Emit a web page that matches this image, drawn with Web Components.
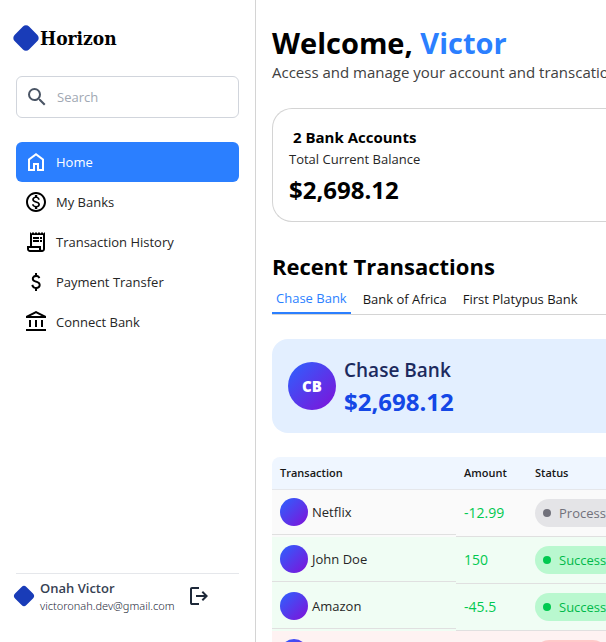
<!DOCTYPE html>
<html lang="en">
<head>
<meta charset="utf-8">
<title>Horizon</title>
<style>
  html, body { margin: 0; height: 100%; }
  body { font-family: "Open Sans", "Noto Sans", sans-serif; font-size: 13px; line-height: 20px; color: #000; background: #fff; overflow: hidden; }
</style>
</head>
<body>
<hz-app>
  <hz-sidebar slot="side">
    <hz-nav-item icon="home" active>Home</hz-nav-item>
    <hz-nav-item icon="coin">My Banks</hz-nav-item>
    <hz-nav-item icon="receipt">Transaction History</hz-nav-item>
    <hz-nav-item icon="dollar">Payment Transfer</hz-nav-item>
    <hz-nav-item icon="bank">Connect Bank</hz-nav-item>
    <hz-user slot="footer" name="Onah Victor" email="victoronah.dev@gmail.com"></hz-user>
  </hz-sidebar>
  <hz-welcome name="Victor">Access and manage your account and transcations efficiently</hz-welcome>
  <hz-balance count="2" total="$2,698.12"></hz-balance>
  <hz-recent>
    <hz-tab slot="tabs" active>Chase Bank</hz-tab>
    <hz-tab slot="tabs">Bank of Africa</hz-tab>
    <hz-tab slot="tabs">First Platypus Bank</hz-tab>
    <hz-account initials="CB" name="Chase Bank" total="$2,698.12"></hz-account>
    <hz-transactions></hz-transactions>
  </hz-recent>
</hz-app>
<script>
const ICONS = {
  search: 'M15.5 14h-.79l-.28-.27A6.471 6.471 0 0 0 16 9.5 6.5 6.5 0 1 0 9.5 16c1.61 0 3.09-.59 4.23-1.57l.27.28v.79l5 4.99L20.49 19l-4.99-5zm-6 0C7.01 14 5 11.99 5 9.5S7.01 5 9.5 5 14 7.01 14 9.5 11.99 14 9.5 14z',
  home: 'M6 19h3v-6h6v6h3v-9l-6-4.5L6 10zm-2 2V9l8-6 8 6v12h-7v-6h-2v6z',
  coin: 'M12 2C6.48 2 2 6.48 2 12s4.48 10 10 10 10-4.48 10-10S17.52 2 12 2zm0 18c-4.41 0-8-3.59-8-8s3.59-8 8-8 8 3.59 8 8-3.59 8-8 8zm.31-8.86c-1.77-.45-2.34-.94-2.34-1.67 0-.84.79-1.43 2.1-1.43 1.38 0 1.9.66 1.94 1.64h1.71c-.05-1.34-.87-2.57-2.49-2.97V5H10.9v1.69c-1.51.32-2.72 1.3-2.72 2.81 0 1.79 1.49 2.69 3.66 3.21 1.95.46 2.34 1.15 2.34 1.87 0 .53-.39 1.39-2.1 1.39-1.6 0-2.23-.72-2.32-1.64H8.04c.1 1.7 1.36 2.66 2.86 2.97V19h2.34v-1.67c1.52-.29 2.72-1.16 2.73-2.77-.01-2.2-1.9-2.96-3.66-3.42z',
  receipt: 'M19.5 3.5 18 2l-1.5 1.5L15 2l-1.5 1.5L12 2l-1.5 1.5L9 2 7.5 3.5 6 2v14H3v3c0 1.66 1.34 3 3 3h12c1.66 0 3-1.34 3-3V2zM15 20H6c-.55 0-1-.45-1-1v-1h10zm4-1c0 .55-.45 1-1 1s-1-.45-1-1v-3H8V5h11zM9 7h6v2H9zm7 0h2v2h-2zm-7 3h6v2H9zm7 0h2v2h-2z',
  dollar: 'M11.025 21v-2.15q-1.325-.3-2.287-1.15t-1.413-2.4l1.85-.75q.375 1.2 1.113 1.825t1.937.625q1.025 0 1.738-.462t.712-1.438q0-.875-.55-1.387t-2.55-1.163q-2.15-.675-2.95-1.612t-.8-2.288q0-1.625 1.05-2.525t2.15-1.025V3h2v2.1q1.25.2 2.063.913t1.187 1.737l-1.85.8q-.3-.8-.85-1.2t-1.5-.4q-1.1 0-1.675.488T9.825 8.65q0 .825.75 1.3t2.6 1q1.725.5 2.613 1.588t.887 2.512q0 1.775-1.05 2.7t-2.6 1.15V21z',
  bank: 'M5 17v-7h2v7zm6 0v-7h2v7zm-9 4v-2h20v2zm15-4v-7h2v7zM2 8V6l10-5 10 5v2zm4.475-2h11.05L12 3.25z',
  logout: 'M5 21q-.825 0-1.412-.587T3 19V5q0-.825.588-1.412T5 3h7v2H5v14h7v2zm11-4-1.375-1.45 2.55-2.55H9v-2h8.175l-2.55-2.55L16 7l5 5z'
};
const icon = n => `<svg class="icon" width="24" height="24" viewBox="0 0 24 24" fill="currentColor" aria-hidden="true"><path d="${ICONS[n]}"/></svg>`;
const define = (tag, css, html) => customElements.define(tag, class extends HTMLElement {
  constructor() {
    super();
    const attr = n => this.getAttribute(n) || '';
    this.attachShadow({ mode: 'open' }).innerHTML =
      `<style>:host,*{box-sizing:border-box}.icon{display:block;flex:none}h1,h2,h3,p{margin:0}${css}</style>${html(attr, this)}`;
  }
});

define('hz-logo', `:host{display:block;flex:none}svg{display:block;width:100%}`,
  () => `<svg viewBox="0 0 26 26" aria-hidden="true"><rect x="3.5" y="3.5" width="19" height="19" rx="4" fill="#193cb8" transform="rotate(45 13 13)"/></svg>`);

define('hz-app', `
  :host{display:grid;grid-template-columns:256px minmax(0,1fr);height:100vh;overflow:hidden}
  main{padding:24px 0 0 16px;overflow:hidden}`,
  () => `<slot name="side"></slot><main><slot></slot></main>`);

define('hz-sidebar', `
  :host{display:flex;flex-direction:column;padding:24px 16px 0;border-right:1px solid #d4d4d4}
  header{display:flex;align-items:center;height:28px;margin-left:-4px}
  header hz-logo{width:28px}
  h1{font:700 19px/26px "DejaVu Serif Condensed","DejaVu Serif",serif}
  label{display:flex;align-items:center;gap:8px;margin-top:24px;height:42px;padding:0 8px;border:1px solid #d1d5dc;border-radius:6px;color:#4a5565}
  input{flex:1;min-width:0;border:0;outline:0;padding:0;background:none;font:inherit;color:#000}
  input::placeholder{color:#a1a8b3;opacity:1}
  nav{display:flex;flex-direction:column;margin-top:24px}
  footer{margin-top:auto;border-top:1px solid #e5e7eb}`,
  () => `<header><hz-logo></hz-logo><h1>Horizon</h1></header>
  <label>${icon('search')}<input type="search" placeholder="Search" aria-label="Search"></label>
  <nav><slot></slot></nav><footer><slot name="footer"></slot></footer>`);

define('hz-nav-item', `
  :host{display:block}
  a{display:flex;align-items:center;gap:8px;height:40px;padding:0 8px;border-radius:6px;color:#262626;text-decoration:none}
  .icon{color:#000}
  :host([active]) a{background:#2b7fff;color:#fff;font-weight:500}
  :host([active]) .icon{color:#fff}`,
  a => `<a href="#${a('icon')}">${icon(a('icon'))}<span><slot></slot></span></a>`);

define('hz-user', `
  :host{display:flex;align-items:center;height:68px;padding-bottom:24px;margin-left:-4px}
  hz-logo{width:22px;margin:0 1px}
  div{margin:0 12px 0 4px;white-space:nowrap;color:#1e2939}
  strong{display:block;font-size:13px;line-height:20px;font-weight:600;color:#364153}
  small{display:block;font:300 11px/16px "Noto Sans",sans-serif}
  button{border:0;padding:0;background:none;color:#1e2939;cursor:pointer}`,
  a => `<hz-logo></hz-logo><div><strong>${a('name')}</strong><small>${a('email')}</small></div><button aria-label="Log out">${icon('logout')}</button>`);

define('hz-welcome', `
  :host{display:block}
  h1{font-size:29px;line-height:38px;font-weight:700}
  h1 span{color:#2b7fff}
  p{font-size:15px;line-height:20px;color:#404040;white-space:nowrap}`,
  a => `<h1>Welcome, <span>${a('name')}</span></h1><p><slot></slot></p>`);

define('hz-balance', `
  :host{display:block;margin-top:26px;padding:18px 16px 14px;border:1px solid #d4d4d4;border-right:0;border-radius:20px 0 0 20px}
  h2{font-size:15px;line-height:20px;font-weight:700;padding-left:4px}
  p{margin-top:2px;color:#262626}
  strong{display:block;font-size:24px;line-height:34px;margin-top:4px}`,
  a => `<h2>${a('count')} Bank Accounts</h2><p>Total Current Balance</p><strong>${a('total')}</strong>`);

define('hz-recent', `
  :host{display:block;margin-top:28px}
  h2{font-size:22px;line-height:32px;font-weight:700;padding-bottom:2px}
  .tabs{display:flex;gap:8px;border-bottom:1px solid #d4d4d4;height:31px}`,
  () => `<h2>Recent Transactions</h2><div class="tabs" role="tablist"><slot name="tabs"></slot></div><slot></slot>`);

define('hz-tab', `
  :host{display:block;flex:none}
  button{height:30px;padding:0 4px;border:0;background:none;font:inherit;color:#171717;white-space:nowrap;cursor:pointer}
  :host([active]) button{border-bottom:2px solid #2b7fff;color:#2b7fff}`,
  (a, el) => `<button role="tab" aria-selected="${el.hasAttribute('active')}"><slot></slot></button>`);

define('hz-account', `
  :host{display:flex;align-items:center;gap:8px;margin-top:24px;padding:15px 16px;border-radius:16px 0 0 16px;background:#e3efff}
  .avatar{display:grid;place-items:center;width:48px;height:48px;border-radius:50%;background:linear-gradient(135deg,#2b63ff,#8110d8);color:#fff;font-size:15px;font-weight:800}
  h3{font-size:19px;line-height:32px;font-weight:600;color:#1c2a5e}
  strong{display:block;font-size:24px;line-height:32px;color:#1447e6}`,
  a => `<span class="avatar">${a('initials')}</span><div><h3>${a('name')}</h3><strong>${a('total')}</strong></div>`);

define('hz-avatar', `:host{display:block;flex:none;width:28px;height:28px;border-radius:50%;background:linear-gradient(135deg,#2b63ff,#8110d8)}`, () => '');

define('hz-status', `
  :host{display:inline-flex;align-items:center;gap:8px;height:28px;padding:0 12px 0 8px;border-radius:14px;background:#b9f8cf;color:#00b84a;vertical-align:middle}
  i{width:8px;height:8px;border-radius:50%;background:#00c950}
  :host([kind=wait]){background:#e4e4e7;color:#71717b}
  :host([kind=wait]) i{background:#71717b}
  :host([kind=fail]){background:#ffc9c9;color:#fb2c36}
  :host([kind=fail]) i{background:#fb2c36}`,
  () => `<i></i><slot></slot>`);

const ROWS = [
  ['Netflix', '-12.99', 'wait', 'Processing'],
  ['John Doe', '150', 'ok', 'Success'],
  ['Amazon', '-45.5', 'ok', 'Success'],
  ['Spotify', '-9.99', 'fail', 'Failed']
];
define('hz-transactions', `
  :host{display:block;margin-top:24px;border-radius:8px 0 0 0;overflow:hidden}
  table{width:100%;border-collapse:separate;border-spacing:0;table-layout:fixed}
  .c1{width:184px}.c2{width:71px}
  th{height:33px;padding:0 8px;text-align:left;font-size:11px;font-weight:600;color:#171717;background:#eff6ff;border-bottom:1px solid #e5e7eb}
  td{height:47px;padding:0 8px;vertical-align:middle;white-space:nowrap;border-bottom:1px solid #e0e0e0}
  td:first-child{padding:0;border:0;vertical-align:top;color:#262626}
  .name{display:flex;align-items:center;gap:4px;height:45px;padding:0 8px;border-bottom:1px solid #e0e0e0}
  .amount{color:#00c950;font-size:14px}
  tr.wait{background:#fafafa}tr.ok{background:#f0fdf4}tr.fail{background:#fef2f2}`,
  () => `<table><colgroup><col class="c1"><col class="c2"><col></colgroup>
  <thead><tr><th>Transaction</th><th>Amount</th><th>Status</th></tr></thead><tbody>${
    ROWS.map(([n, m, k, s]) => `<tr class="${k}"><td><div class="name"><hz-avatar></hz-avatar>${n}</div></td><td class="amount">${m}</td><td><hz-status kind="${k}">${s}</hz-status></td></tr>`).join('')
  }</tbody></table>`);
</script>
</body>
</html>
